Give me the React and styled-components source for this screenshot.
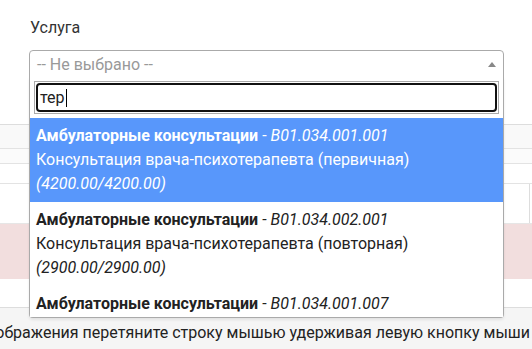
import React from 'react';
import styled, { createGlobalStyle } from 'styled-components';

const GlobalStyle = createGlobalStyle`
  html, body {
    margin: 0;
    padding: 0;
    background: #fff;
  }
  body {
    font-family: Roboto, "Liberation Sans", sans-serif;
    color: #333;
    overflow: hidden;
  }
`;

const Page = styled.div`
  position: relative;
  width: 532px;
  height: 349px;
  overflow: hidden;
`;

const FormGroup = styled.div`
  padding: 18px 28px 0 29px;
  height: 124px;
  box-sizing: border-box;
`;

const Label = styled.div`
  font-size: 16px;
  line-height: 20px;
  margin: 0 0 12px 1px;
`;

const Select = styled.div`
  height: 28px;
  box-sizing: border-box;
  border: 1px solid #aaa;
  border-radius: 4px 4px 0 0;
  display: flex;
  align-items: center;
  justify-content: space-between;
  padding: 0 7px 0 7px;
  font-size: 16px;
  color: #999;
`;

const Arrow = styled.span`
  width: 0;
  height: 0;
  border-left: 4px solid transparent;
  border-right: 4px solid transparent;
  border-bottom: 5px solid #888;
`;

const Table = styled.div`
  border-top: 1px solid #ddd;
`;

const Row = styled.div`
  height: ${({ h }) => h}px;
  background: ${({ bg }) => bg || '#fff'};
  border-bottom: 1px solid ${({ line }) => line || '#e6e6e6'};
  box-sizing: border-box;
  display: flex;
  justify-content: flex-end;
`;

const Cell = styled.div`
  width: 2px;
  border-left: 1px solid #ddd;
`;

const Footer = styled.div`
  height: 41px;
  background: #f5f5f5;
  display: flex;
  justify-content: flex-end;
  align-items: center;
  padding: 8px 2px 0 0;
  box-sizing: border-box;
  white-space: nowrap;
  overflow: hidden;
  font-size: 16px;
  color: #222;
`;

const Dropdown = styled.div`
  position: absolute;
  left: 29px;
  top: 77px;
  width: 475px;
  box-sizing: border-box;
  background: #fff;
  border: 1px solid #aaa;
  border-top: none;
  border-radius: 0 0 4px 4px;
  box-shadow: 0 2px 3px rgba(0, 0, 0, 0.08);
`;

const SearchWrap = styled.div`
  padding: 4px 4px 4px 4px;
`;

const SearchBox = styled.div`
  border: 1px solid #aaa;
  padding: 1px;
`;

const SearchInput = styled.div`
  height: 29px;
  box-sizing: border-box;
  border: 2px solid #111;
  border-radius: 4px;
  display: flex;
  align-items: center;
  padding-left: 2px;
  font-size: 16px;
  color: #222;
`;

const Caret = styled.span`
  display: inline-block;
  width: 1px;
  height: 18px;
  background: #000;
  margin-left: 1px;
`;

const Results = styled.ul`
  list-style: none;
  margin: 0;
  padding: 0;
  height: 199px;
  overflow-y: scroll;
`;

const Option = styled.li`
  padding: 6px 6px;
  font-size: 16px;
  line-height: 24px;
  white-space: nowrap;
  background: ${({ active }) => (active ? '#5897fb' : '#fff')};
  color: ${({ active }) => (active ? '#fff' : '#222')};
`;

const Title = styled.b`
  font-weight: 700;
`;

const Code = styled.i``;

const options = [
  { code: 'B01.034.001.001', name: 'Консультация врача-психотерапевта (первичная)', price: '4200.00/4200.00' },
  { code: 'B01.034.002.001', name: 'Консультация врача-психотерапевта (повторная)', price: '2900.00/2900.00' },
  { code: 'B01.034.001.007', name: 'Консультация врача-психотерапевта (семейная)', price: '5500.00/5500.00' },
  { code: 'B01.034.002.007', name: 'Консультация врача-психотерапевта (семейная)', price: '4500.00/4500.00' },
  { code: 'B01.034.001.002', name: 'Консультация врача-психотерапевта, к.м.н.', price: '5000.00/5000.00' },
  { code: 'B01.034.002.002', name: 'Консультация врача-психотерапевта, к.м.н.', price: '3500.00/3500.00' },
  { code: 'B01.034.001.003', name: 'Консультация врача-психотерапевта онлайн', price: '3800.00/3800.00' },
  { code: 'B01.034.002.003', name: 'Консультация врача-психотерапевта онлайн', price: '2700.00/2700.00' },
];

export default function App() {
  return (
    <Page>
      <GlobalStyle />
      <FormGroup>
        <Label>Услуга</Label>
        <Select>
          <span>-- Не выбрано --</span>
          <Arrow />
        </Select>
      </FormGroup>
      <Table>
        <Row h={24} bg="#f9f9f9" line="#e3e3e3" />
        <Row h={15} bg="#fbfbfb" line="#e3e3e3" />
        <Row h={20} line="#e3e3e3" />
        <Row h={40}>
          <Cell />
        </Row>
        <Row h={55} bg="#f2dede" line="#f2dede" />
        <Row h={29} line="#ddd" />
      </Table>
      <Footer>
        Для изменения порядка отображения перетяните строку мышью удерживая левую кнопку мыши
      </Footer>
      <Dropdown>
        <SearchWrap>
          <SearchBox>
            <SearchInput>
              тер<Caret />
            </SearchInput>
          </SearchBox>
        </SearchWrap>
        <Results>
          {options.map((o, i) => (
            <Option key={o.code} active={i === 0}>
              <Title>Амбулаторные консультации</Title> - <Code>{o.code}</Code>
              <br />
              {o.name}
              <br />
              <Code>({o.price})</Code>
            </Option>
          ))}
        </Results>
      </Dropdown>
    </Page>
  );
}
